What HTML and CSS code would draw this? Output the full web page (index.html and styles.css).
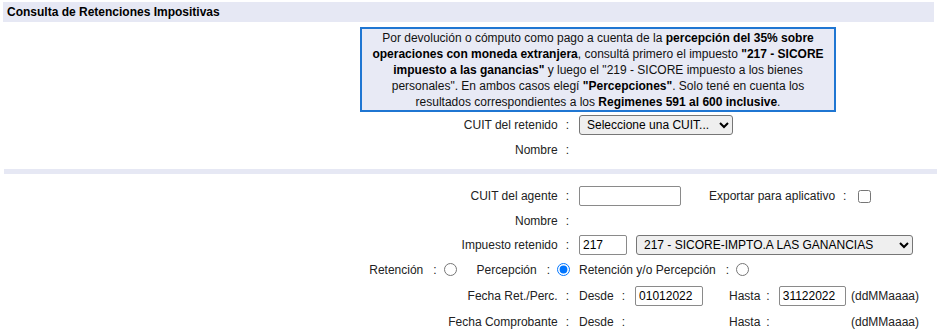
FILE: index.html
```html
<!DOCTYPE html>
<html lang="es">
<head>
    <meta charset="UTF-8">
    <title>Consulta de Retenciones Impositivas</title>
    <link rel="stylesheet" href="styles.css">
</head>
<body>
<div class="titulo">Consulta de Retenciones Impositivas</div>

<div class="aviso">
    Por devolución o cómputo como pago a cuenta de la <b>percepción del 35% sobre</b><br>
    <b>operaciones con moneda extranjera</b>, consultá primero el impuesto <b>"217 - SICORE</b><br>
    <b>impuesto a las ganancias"</b> y luego el "219 - SICORE impuesto a los bienes<br>
    personales". En ambos casos elegí <b>"Percepciones"</b>. Solo tené en cuenta los<br>
    resultados correspondientes a los <b>Regimenes 591 al 600 inclusive</b>.
</div>

<div class="form form-sup">
    <div class="lbl">CUIT del retenido<span class="dp">:</span></div>
    <div class="val">
        <select class="sel sel-cuit">
            <option>Seleccione una CUIT...</option>
        </select>
    </div>

    <div class="lbl">Nombre<span class="dp">:</span></div>
    <div class="val"></div>
</div>

<div class="separador"></div>

<div class="form form-inf">
    <div class="lbl">CUIT del agente<span class="dp">:</span></div>
    <div class="val">
        <input type="text" class="txt txt-cuit">
        <span class="exportar">Exportar para aplicativo<span class="dp">:</span></span>
        <input type="checkbox" class="chk">
    </div>

    <div class="lbl">Nombre<span class="dp">:</span></div>
    <div class="val"></div>

    <div class="lbl">Impuesto retenido<span class="dp">:</span></div>
    <div class="val">
        <input type="text" class="txt txt-imp" value="217">
        <select class="sel sel-imp">
            <option>217 - SICORE-IMPTO.A LAS GANANCIAS</option>
        </select>
    </div>

    <div class="lbl lbl-radio">
        Retención<span class="dp dp-r">:</span><input type="radio" name="tipo" class="rad">
        <span class="perc">Percepción</span><span class="dp dp-r">:</span><input type="radio" name="tipo" class="rad" checked>
    </div>
    <div class="val">
        Retención y/o Percepción<span class="dp dp-r">:</span><input type="radio" name="tipo" class="rad">
    </div>

    <div class="lbl">Fecha Ret./Perc.<span class="dp">:</span></div>
    <div class="val">
        <span class="desde">Desde<span class="dp">:</span><input type="text" class="txt txt-fecha" value="01012022"></span>
        <span class="hasta">Hasta<span class="dp dp-h">:</span><input type="text" class="txt txt-fecha2" value="31122022"></span>
        <span>(ddMMaaaa)</span>
    </div>

    <div class="lbl">Fecha Comprobante<span class="dp">:</span></div>
    <div class="val">
        <span class="desde">Desde<span class="dp">:</span></span>
        <span class="hasta">Hasta<span class="dp dp-h">:</span></span>
        <span>(ddMMaaaa)</span>
    </div>
</div>
</body>
</html>
```

FILE: styles.css
```css
*{ margin:0; padding:0; box-sizing:border-box;}
body{ font:12px "Liberation Sans", Arial, sans-serif; color:#222; background:#fff; width:937px; overflow:hidden;}

.titulo{ margin:2px 3px 0 3px; height:20px; line-height:20px; padding-left:4px; background:#e6e8f4; font-weight:bold; color:#000;}

.aviso{ width:476px; height:85px; margin:5px 0 0 360px; border:2px solid #1f76d2; background:#e8eaf5; padding-top:1px; text-align:center; line-height:16px; color:#111;}
.aviso b{ color:#000;}

.form{ display:grid; grid-template-columns:579px 1fr; align-items:center;}
.form-sup{ grid-template-rows:26px 24px;}
.form-inf{ margin-top:9px; grid-template-rows:26px 24px 23px 27px 26px 26px;}

.lbl{ text-align:right; padding-right:10px; white-space:nowrap;}
.val{ display:flex; align-items:center; white-space:nowrap;}
.dp{ margin-left:8px;}
.dp-r{ margin-left:10px;}
.dp-h{ margin-left:6px;}

.lbl-radio{ display:flex; align-items:center; justify-content:flex-end; padding-right:9px;}
.perc{ margin-left:20px;}
.rad{ width:13px; height:13px; margin:0 0 0 7px;}

.txt{ height:20px; border:1px solid #8a8a8a; border-radius:2px; padding:0 3px; font:12px "Liberation Sans", Arial, sans-serif; color:#000; background:#fff;}
.txt-cuit{ width:102px;}
.txt-imp{ width:48px;}
.txt-fecha{ width:68px; margin-left:10px;}
.txt-fecha2{ width:67px; margin-left:9px;}

.sel{ height:20px; border:1px solid #767676; border-radius:3px; background:#efefef; font:12px "Liberation Sans", Arial, sans-serif; color:#000; padding-left:3px;}
.sel-cuit{ width:154px;}
.sel-imp{ width:277px; margin-left:9px;}

.exportar{ margin-left:28px;}
.chk{ width:13px; height:13px; margin-left:12px;}

.desde{ width:150px; display:flex; align-items:center;}
.hasta{ width:122px; display:flex; align-items:center;}

.separador{ margin:7px 0 0 4px; height:5px; background:#e6e8f4;}
```
